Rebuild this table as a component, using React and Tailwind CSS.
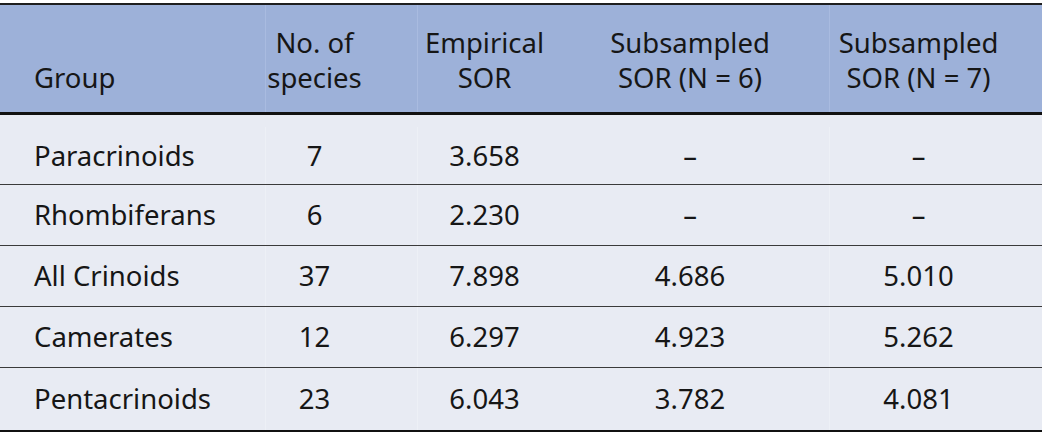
import React from "react";

const rows = [
  ["Paracrinoids", "7", "3.658", "–", "–"],
  ["Rhombiferans", "6", "2.230", "–", "–"],
  ["All Crinoids", "37", "7.898", "4.686", "5.010"],
  ["Camerates", "12", "6.297", "4.923", "5.262"],
  ["Pentacrinoids", "23", "6.043", "3.782", "4.081"],
];

function Row({ r, first, last }) {
  const h = first ? "h-[70px] pt-[12px] border-b border-[#3a3a3a]" : last ? "h-[62px]" : "h-[61px] border-b border-[#3a3a3a]";
  return (
    <div className={`grid grid-cols-[265px_152px_134px_278px_213px] ${h}`}>
      <div className="flex items-center pl-[34px]">{r[0]}</div>
      <div className="flex items-center justify-center pr-[54px] border-l border-[#edf0f6]">{r[1]}</div>
      <div className="flex items-center justify-center border-l border-[#edf0f6]">{r[2]}</div>
      <div className="flex items-center justify-center">{r[3]}</div>
      <div className="flex items-center justify-center pr-[35px] border-l border-[#edf0f6]">{r[4]}</div>
    </div>
  );
}

export default function App() {
  return (
    <div className="w-[1042px] h-[434px] bg-white pt-[3px] text-[#161616] text-[27.5px] overflow-hidden" style={{ fontFamily: '"Noto Sans", sans-serif' }}>
      <div className="border-t-2 border-[#1e1e1e] bg-[#9db1d9] h-[112px] border-b-[3px] border-b-[#111] grid grid-cols-[265px_152px_134px_278px_213px] leading-[35px]">
        <div className="flex items-end pl-[34px] pb-[17px]">Group</div>
        <div className="flex flex-col items-center justify-end pr-[54px] pb-[17px] border-l border-[#a9bbe0]">
          <span>No. of</span>
          <span>species</span>
        </div>
        <div className="flex flex-col items-center justify-end pb-[17px] border-l border-[#a9bbe0]">
          <span>Empirical</span>
          <span>SOR</span>
        </div>
        <div className="flex flex-col items-center justify-end pb-[17px]">
          <span>Subsampled</span>
          <span>SOR (N = 6)</span>
        </div>
        <div className="flex flex-col items-center justify-end pr-[35px] pb-[17px] border-l border-[#a9bbe0]">
          <span>Subsampled</span>
          <span>SOR (N = 7)</span>
        </div>
      </div>
      <div className="bg-[#e8ebf3] border-b-2 border-[#111]">
        {rows.map((r, i) => (
          <Row key={i} r={r} first={i === 0} last={i === rows.length - 1} />
        ))}
      </div>
    </div>
  );
}
